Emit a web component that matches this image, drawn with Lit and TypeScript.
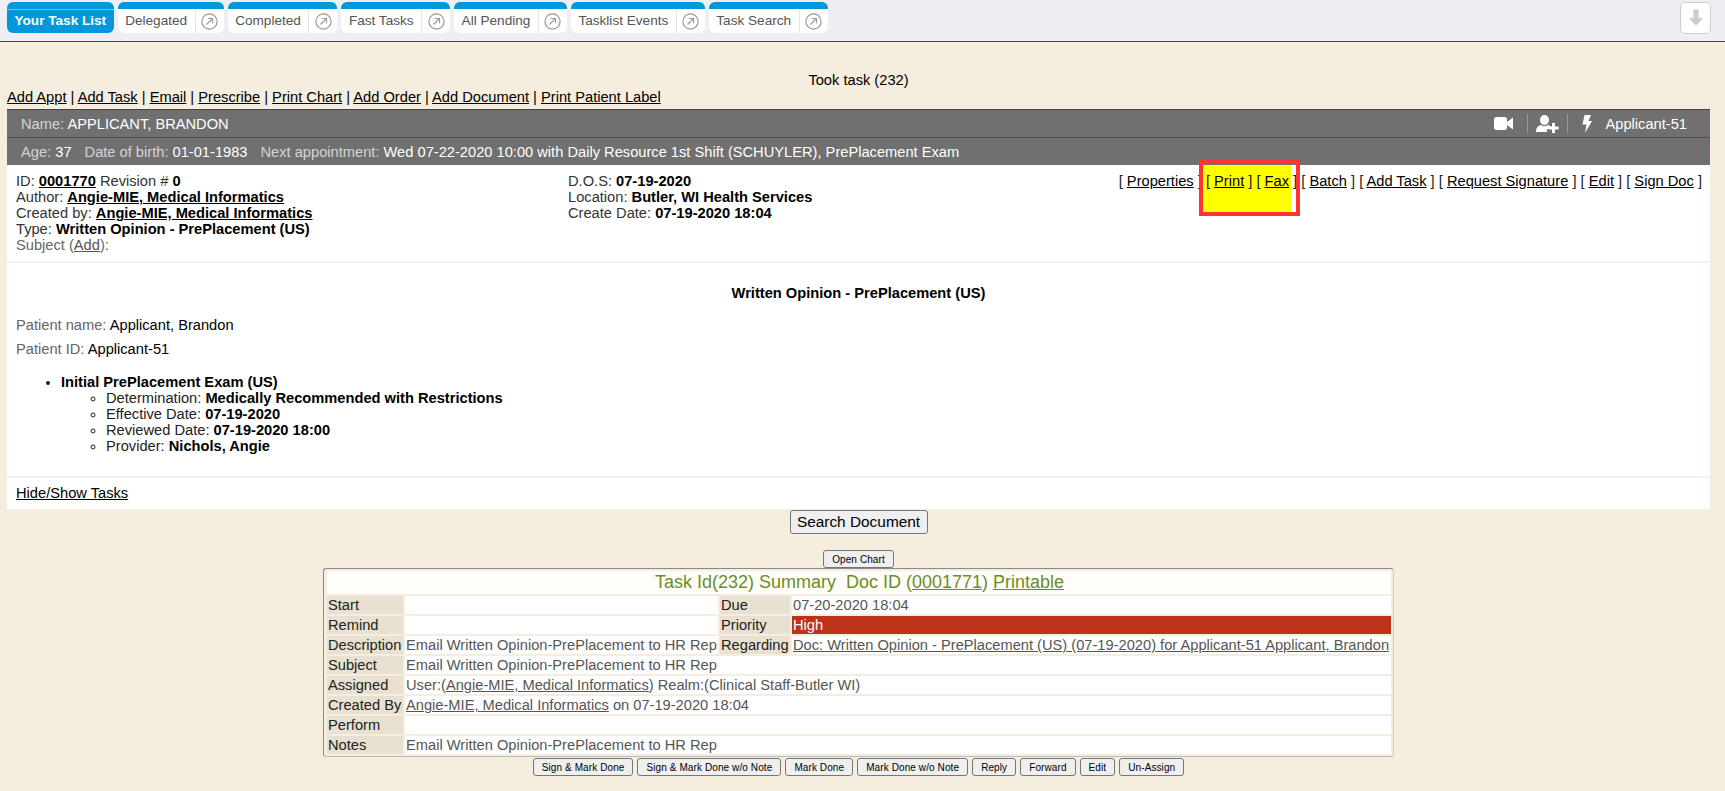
import { LitElement, html, css, svg } from "lit";
import { customElement } from "lit/decorators.js";

const tabs = ["Delegated", "Completed", "Fast Tasks", "All Pending", "Tasklist Events", "Task Search"];
const links = ["Add Appt", "Add Task", "Email", "Prescribe", "Print Chart", "Add Order", "Add Document", "Print Patient Label"];
const actions = ["Properties", "Print", "Fax", "Batch", "Add Task", "Request Signature", "Edit", "Sign Doc"];
const taskButtons = ["Sign & Mark Done", "Sign & Mark Done w/o Note", "Mark Done", "Mark Done w/o Note", "Reply", "Forward", "Edit", "Un-Assign"];

const popIcon = svg`<svg width="17" height="17" viewBox="0 0 17 17" fill="none" stroke="#999" stroke-width="1.2"><circle cx="8.5" cy="8.5" r="7.6"/><path d="M5.5 11.5 11.3 5.7M6.8 5.5h4.7v4.7"/></svg>`;

@customElement("app-root")
export class AppRoot extends LitElement {
  static styles = css`
    :host { display: block; min-height: 791px; background: #f5eddd; font: 14.67px/16px "Liberation Sans", Arial, sans-serif; color: #000; }
    a { color: inherit; text-decoration: underline; }
    b { font-weight: 700; }
    .topbar { border-bottom: 1px solid #444; background: #eeeef4; display: flex; justify-content: space-between; padding: 2px 14px 0 7px; box-sizing: border-box; height: 42px; }
    .tabs { display: flex; gap: 4px; align-items: flex-start; }
    .tab { display: flex; height: 31px; box-sizing: border-box; border-top: 7px solid #0097db; border-radius: 6px; background: #fff; color: #555; align-items: stretch; line-height: 23px; font-size: 13.6px; }
    .tab .name { padding: 0 7.5px; }
    .tab .pop { width: 28px; border-left: 1px solid #e4e4e4; display: flex; align-items: center; justify-content: center; }
    .tab.active { background: #0097db; border-top-color: #0097db; box-shadow: inset 0 1px 0 #6cc4ec; color: #fff; font-weight: 700; }
    .down { width: 31px; height: 32px; box-sizing: border-box; background: #fff; border: 1px solid #ccc; border-radius: 5px; display: flex; align-items: center; justify-content: center; }
    .body { padding-right: 8px; }
    .msg { text-align: center; padding-top: 30px; height: 17px; }
    .links { padding: 0 7px; height: 20px; }
    .card { margin: 0 7px; position: relative; }
    .hdr { background: #707070; color: #d4d4d4; border-top: 1px solid #444; }
    .hdr .row { height: 27px; display: flex; align-items: center; padding: 0 14px; gap: 13px; }
    .hdr .row + .row { border-top: 1px solid #4c4c4c; }
    .hdr .val { color: #fff; }
    .hdr .spacer { flex: 1; }
    .tools { display: flex; align-items: center; margin-right: 9px; }
    .tools .sep { width: 1px; height: 19px; background: #999; }
    .tools .ic { display: flex; }
    .tools .video { margin-right: 14px; }
    .tools .person { margin: 0 8px; }
    .tools .bolt { margin: 0 14px; }
    .panel { background: #fff; position: relative; }
    .meta { display: flex; padding: 8px 8px 8px 9px; height: 80px; border-bottom: 2px solid #f1f1f1; color: #333; }
    .meta .c1 { width: 552px; }
    .meta .c2 { flex: 1; }
    .meta .acts { position: relative; z-index: 1; white-space: nowrap; color: #222; }
    .meta .sub { color: #666; }
    .meta a, .meta b { color: #000; }
    .meta .sub a { color: #555; }
    .hl { position: absolute; top: 0; right: 419px; width: 88px; height: 47px; background: #ff0; }
    .redbox { position: absolute; z-index: 2; top: -5px; right: 410px; width: 101px; height: 56px; box-sizing: border-box; border: 4px solid #ff3333; }
    .doc { padding: 22px 9px 22px; box-sizing: border-box; border-bottom: 2px solid #f1f1f1; height: 215px; }
    .doc h4 { margin: 0 0 16px; font-size: 14.67px; line-height: 16px; text-align: center; }
    .doc .pl { margin: 0 0 8px; color: #666; }
    .doc .pl span { color: #000; }
    .doc ul { margin: 17px 0 0; padding-left: 45px; color: #222; }
    .doc ul ul { margin: 0; list-style: circle; }
    .doc li b { color: #000; }
    .foot { padding: 7px 9px 8px; height: 31px; box-sizing: border-box; }
    .center { display: flex; justify-content: center; }
    button { font-family: "Liberation Sans", Arial, sans-serif; background: #efefef; border: 1px solid #767676; border-radius: 3px; color: #000; padding: 0; }
    .search { margin-top: 1px; height: 24px; width: 138px; box-sizing: border-box; font-size: 15.4px; }
    .small { height: 18px; font-size: 10px; padding: 0 8px; letter-spacing: .1px; white-space: nowrap; }
    .open { margin-top: 16px; }
    .summary { width: 1071px; box-sizing: border-box; margin: 0 auto; border: 1px solid #8a8a8a; border-right-color: #ccc; border-bottom-color: #bbb; border-radius: 3px; padding: 0 0 0 1px; }
    table { border-collapse: separate; border-spacing: 2px; table-layout: fixed; width: 1068px; color: #555; }
    td { height: 18px; padding: 0 0 0 1px; line-height: 18px; background: #fff; overflow: hidden; white-space: nowrap; box-sizing: border-box; }
    td.l { background: #e8e1d1; color: #222; }
    td.title { height: 23px; background: #fffdf9; text-align: center; color: #6b8e23; font-size: 18px; line-height: 23px; }
    td.high { background: #bd3219; color: #fff; }
    .btns { display: flex; justify-content: center; gap: 4px; margin-top: 1px; }
  `;

  render() {
    return html`
      <div class="topbar">
        <div class="tabs">
          <div class="tab active"><span class="name">Your Task List</span></div>
          ${tabs.map((t) => html`<div class="tab"><span class="name">${t}</span><span class="pop">${popIcon}</span></div>`)}
        </div>
        <div class="down">
          <svg width="18" height="20" viewBox="0 0 18 20"><path d="M6.500 1.500h5v8.500h4.500L9 18 2 10h4.500z" fill="#ccc"/></svg>
        </div>
      </div>
      <div class="body">
        <div class="msg">Took task (232)</div>
        <div class="links">
          ${links.map((l, i) => html`${i ? " | " : ""}<a href="#">${l}</a>`)}
        </div>
        <div class="card">
          <div class="hdr">
            <div class="row">
              <span>Name: <span class="val">APPLICANT, BRANDON</span></span>
              <span class="spacer"></span>
              <div class="tools">
                <span class="ic video"><svg width="19" height="13" viewBox="0 0 19 13"><rect x="0" y="0" width="13" height="13" rx="2.500" fill="#fff"/><path d="M13 5 19 .5v12L13 8z" fill="#fff"/></svg></span>
                <span class="sep"></span>
                <span class="ic person"><svg width="23" height="18" viewBox="0 0 23 18" fill="#fff"><ellipse cx="8.500" cy="5" rx="4.500" ry="5"/><path d="M0 17c0-5 3-6.500 5-7 2 1.500 5 1.500 7 0 1 .3 2 .8 2.500 1.500V14H11v3z"/><path d="M16 8h3v3.500h3.500v3H19V18h-3v-3.500h-3.500v-3H16z"/></svg></span>
                <span class="sep"></span>
                <span class="ic bolt"><svg width="10" height="18" viewBox="0 0 10 18"><path d="M2.500 0H9L6.500 6H10L3 18 4.500 9.500H.5z" fill="#fff"/></svg></span>
                <span class="val">Applicant-51</span>
              </div>
            </div>
            <div class="row">
              <span>Age: <span class="val">37</span></span>
              <span>Date of birth: <span class="val">01-01-1983</span></span>
              <span>Next appointment: <span class="val">Wed 07-22-2020 10:00 with Daily Resource 1st Shift (SCHUYLER), PrePlacement Exam</span></span>
            </div>
          </div>
          <div class="panel">
            <div class="hl"></div>
            <div class="redbox"></div>
            <div class="meta">
              <div class="c1">
                ID: <a href="#"><b>0001770</b></a> Revision # <b>0</b><br />
                Author: <a href="#"><b>Angie-MIE, Medical Informatics</b></a><br />
                Created by: <a href="#"><b>Angie-MIE, Medical Informatics</b></a><br />
                Type: <b>Written Opinion - PrePlacement (US)</b><br />
                <span class="sub">Subject (<a href="#">Add</a>):</span>
              </div>
              <div class="c2">
                D.O.S: <b>07-19-2020</b><br />
                Location: <b>Butler, WI Health Services</b><br />
                Create Date: <b>07-19-2020 18:04</b>
              </div>
              <div class="acts">
                ${actions.map((a, i) => html`${i ? " " : ""}[ <a href="#">${a}</a> ]`)}
              </div>
            </div>
            <div class="doc">
              <h4>Written Opinion - PrePlacement (US)</h4>
              <p class="pl">Patient name: <span>Applicant, Brandon</span></p>
              <p class="pl">Patient ID: <span>Applicant-51</span></p>
              <ul>
                <li><b>Initial PrePlacement Exam (US)</b>
                  <ul>
                    <li>Determination: <b>Medically Recommended with Restrictions</b></li>
                    <li>Effective Date: <b>07-19-2020</b></li>
                    <li>Reviewed Date: <b>07-19-2020 18:00</b></li>
                    <li>Provider: <b>Nichols, Angie</b></li>
                  </ul>
                </li>
              </ul>
            </div>
            <div class="foot"><a href="#">Hide/Show Tasks</a></div>
          </div>
        </div>
        <div class="center"><button class="search">Search Document</button></div>
        <div class="center"><button class="small open">Open Chart</button></div>
        <div class="summary">
          <table>
            <colgroup><col style="width:76px" /><col style="width:313px" /><col style="width:70px" /><col style="width:599px" /></colgroup>
            <tr><td class="title" colspan="4">Task Id(232) Summary&nbsp; Doc ID (<a href="#">0001771</a>) <a href="#">Printable</a></td></tr>
            <tr><td class="l">Start</td><td></td><td class="l">Due</td><td>07-20-2020 18:04</td></tr>
            <tr><td class="l">Remind</td><td></td><td class="l">Priority</td><td class="high">High</td></tr>
            <tr><td class="l">Description</td><td>Email Written Opinion-PrePlacement to HR Rep</td><td class="l">Regarding</td><td><a href="#">Doc: Written Opinion - PrePlacement (US) (07-19-2020) for Applicant-51 Applicant, Brandon</a></td></tr>
            <tr><td class="l">Subject</td><td colspan="3">Email Written Opinion-PrePlacement to HR Rep</td></tr>
            <tr><td class="l">Assigned</td><td colspan="3">User:(<a href="#">Angie-MIE, Medical Informatics</a>) Realm:(Clinical Staff-Butler WI)</td></tr>
            <tr><td class="l">Created By</td><td colspan="3"><a href="#">Angie-MIE, Medical Informatics</a> on 07-19-2020 18:04</td></tr>
            <tr><td class="l">Perform</td><td colspan="3"></td></tr>
            <tr><td class="l">Notes</td><td colspan="3">Email Written Opinion-PrePlacement to HR Rep</td></tr>
          </table>
        </div>
        <div class="btns">${taskButtons.map((b) => html`<button class="small">${b}</button>`)}</div>
      </div>
    `;
  }
}
